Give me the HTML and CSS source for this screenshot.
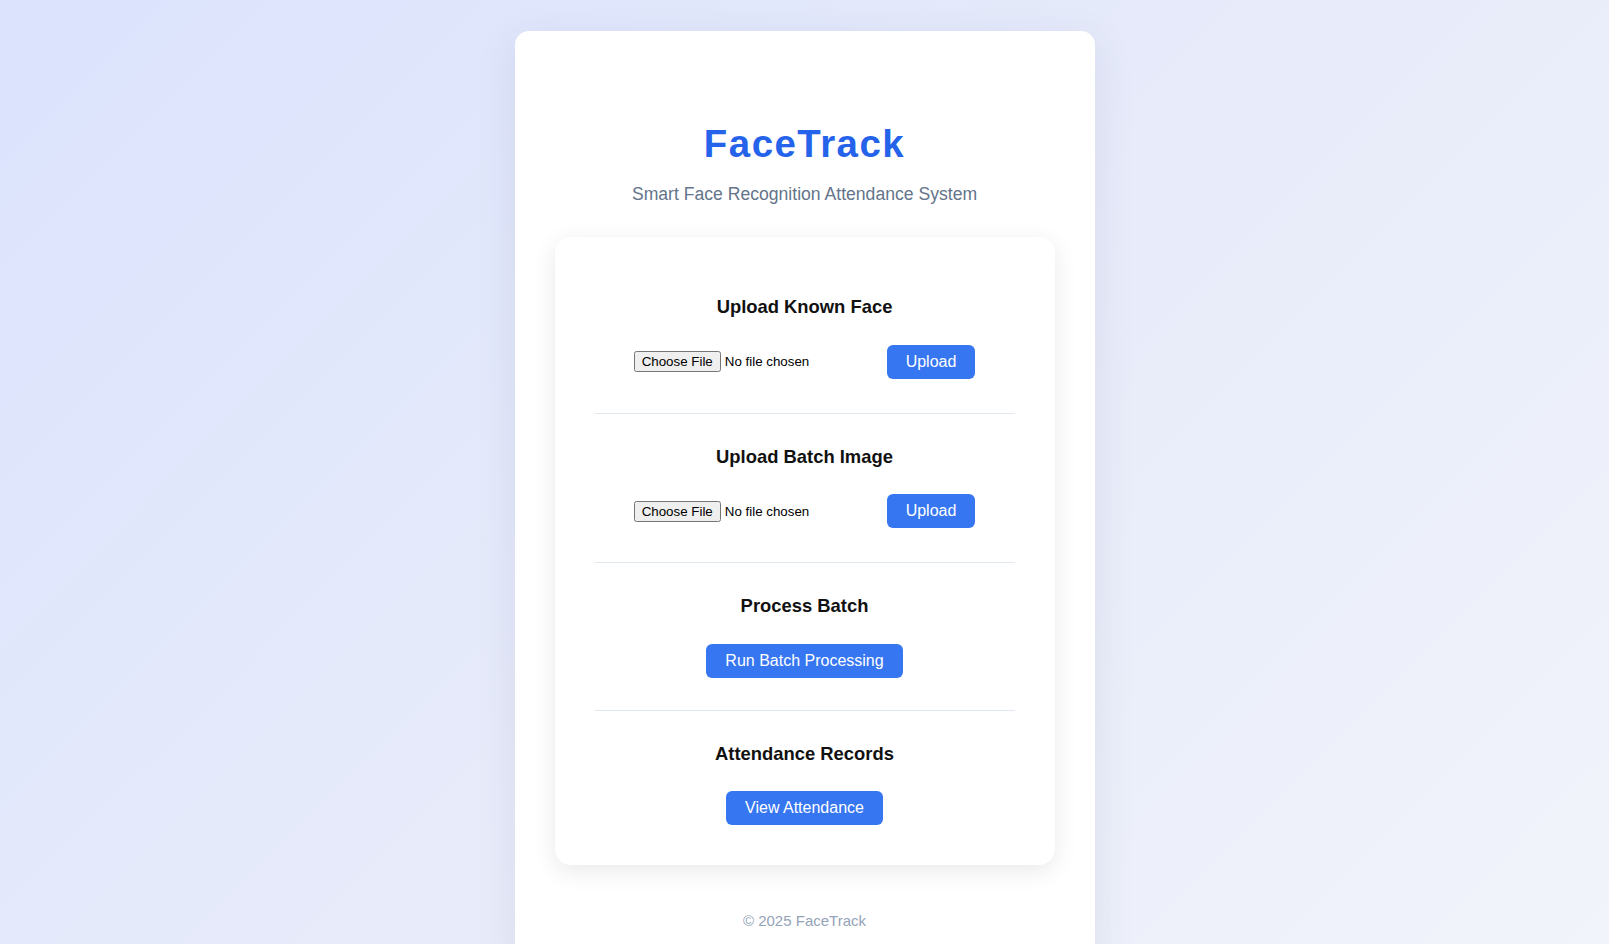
FILE: index.html
```html
<!DOCTYPE html>
<html lang="en">
<head>
<meta charset="utf-8">
<title>FaceTrack</title>
<link rel="stylesheet" href="styles.css">
</head>
<body>
  <div class="app">
    <header class="header">
      <h1 class="title">FaceTrack</h1>
      <p class="subtitle">Smart Face Recognition Attendance System</p>
    </header>
    <main class="panel">
      <section class="section">
        <h3 class="section-title">Upload Known Face</h3>
        <form class="row">
          <input type="file" class="file">
          <button type="button" class="btn">Upload</button>
        </form>
      </section>
      <section class="section">
        <h3 class="section-title">Upload Batch Image</h3>
        <form class="row">
          <input type="file" class="file">
          <button type="button" class="btn">Upload</button>
        </form>
      </section>
      <section class="section section-tight">
        <h3 class="section-title">Process Batch</h3>
        <div class="row">
          <button type="button" class="btn">Run Batch Processing</button>
        </div>
      </section>
      <section class="section">
        <h3 class="section-title">Attendance Records</h3>
        <div class="row">
          <button type="button" class="btn">View Attendance</button>
        </div>
      </section>
    </main>
    <footer class="footer">© 2025 FaceTrack</footer>
  </div>
</body>
</html>
```

FILE: styles.css
```css
* { box-sizing: border-box; }

html, body {
  margin: 0;
  padding: 0;
}

body {
  min-height: 100vh;
  font-family: "Liberation Sans", Arial, sans-serif;
  background: linear-gradient(135deg, #dbe3fd 0%, #e7ebfa 50%, #f1f4fa 100%);
  padding-top: 31px;
  overflow: hidden;
}

.app {
  width: 580px;
  margin: 0 auto;
  background: #ffffff;
  border-radius: 14px;
  padding: 40px 40px 40px;
  box-shadow: 0 10px 40px rgba(60, 70, 110, 0.10);
}

.header {
  text-align: center;
  padding-top: 51px;
}

.title {
  margin: 0;
  font-size: 38.4px;
  font-weight: 700;
  letter-spacing: 1.5px;
  color: #2563eb;
}

.subtitle {
  margin: 18px 0 0;
  font-size: 17.6px;
  color: #64748b;
}

.panel {
  margin-top: 32px;
  background: #ffffff;
  border-radius: 16px;
  padding: 40px;
  box-shadow: 0 6px 24px rgba(0, 0, 0, 0.09);
}

.section {
  padding: 32px 0 34px;
  border-bottom: 1px solid #e2e8f0;
  text-align: center;
}

.section:first-child { padding-top: 19px; }
.section-tight { padding-bottom: 32px; }
.section:last-child { padding-bottom: 0; border-bottom: none; }

.section-title {
  margin: 0 0 26.5px;
  font-size: 18.4px;
  font-weight: 700;
  color: #111111;
}

.row {
  margin: 0;
  display: flex;
  justify-content: center;
  align-items: center;
  gap: 0;
}

.file {
  font-family: "Liberation Sans", Arial, sans-serif;
  font-size: 13.33px;
  color: #000;
}

.btn {
  font-family: "Liberation Sans", Arial, sans-serif;
  font-size: 16px;
  color: #ffffff;
  background: #3676f1;
  border: none;
  border-radius: 6px;
  padding: 8px 19px;
  line-height: 18px;
  height: 34px;
  cursor: pointer;
}

.footer {
  margin-top: 47px;
  text-align: center;
  font-size: 15px;
  color: #94a3b8;
}
```
